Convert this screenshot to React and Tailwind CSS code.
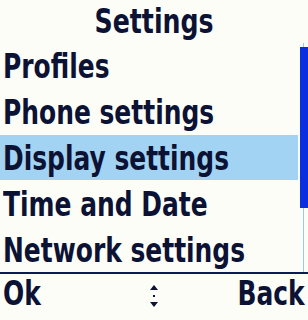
import React from 'react';

const items = ['Profiles', 'Phone settings', 'Display settings', 'Time and Date', 'Network settings'];

const font = { fontFamily: '"DejaVu Sans Condensed", "Liberation Sans", sans-serif' };

export default function App() {
  const selected = 2;
  return (
    <div
      className="w-[308px] h-[320px] bg-[#fdfdf8] text-[#0b1233] font-bold flex flex-col overflow-hidden"
      style={font}
    >
      <div className="h-[43px] flex items-center justify-center text-[33px] leading-none">
        <span className="scale-x-[0.85] origin-center">Settings</span>
      </div>

      <div className="flex h-[229px]">
        <div className="flex-1 flex flex-col pr-[2px]">
          {items.map((label, i) => (
            <div
              key={label}
              className={
                'h-[46px] flex items-center pl-[3px] pt-[2px] text-[33px] leading-none ' +
                (i === selected ? 'bg-[#a3d3f2]' : '')
              }
            >
              <span className="scale-x-[0.84] origin-left whitespace-nowrap">{label}</span>
            </div>
          ))}
        </div>
        <div className="w-[8px] relative">
          <div className="absolute left-[3px] top-0 bottom-0 w-[1px] bg-[#9cc8ee]" />
          <div className="absolute left-0 right-0 top-[4px] h-[161px] bg-[#0b2fe0]" />
        </div>
      </div>

      <div className="h-[2px] bg-[#0b1a55]" />

      <div className="flex-1 grid grid-cols-3 items-center px-[3px] pb-[8px] text-[33px] leading-none">
        <span className="scale-x-[0.84] origin-left">Ok</span>
        <span className="flex flex-col items-center gap-[5px] pt-[6px]">
          <span className="w-0 h-0 border-l-[4px] border-r-[4px] border-b-[5px] border-l-transparent border-r-transparent border-b-[#0b1233]" />
          <span className="w-[2px] h-[2px] bg-[#0b1233]" />
          <span className="w-0 h-0 border-l-[4px] border-r-[4px] border-t-[5px] border-l-transparent border-r-transparent border-t-[#0b1233]" />
        </span>
        <span className="scale-x-[0.84] origin-right text-right">Back</span>
      </div>
    </div>
  );
}
